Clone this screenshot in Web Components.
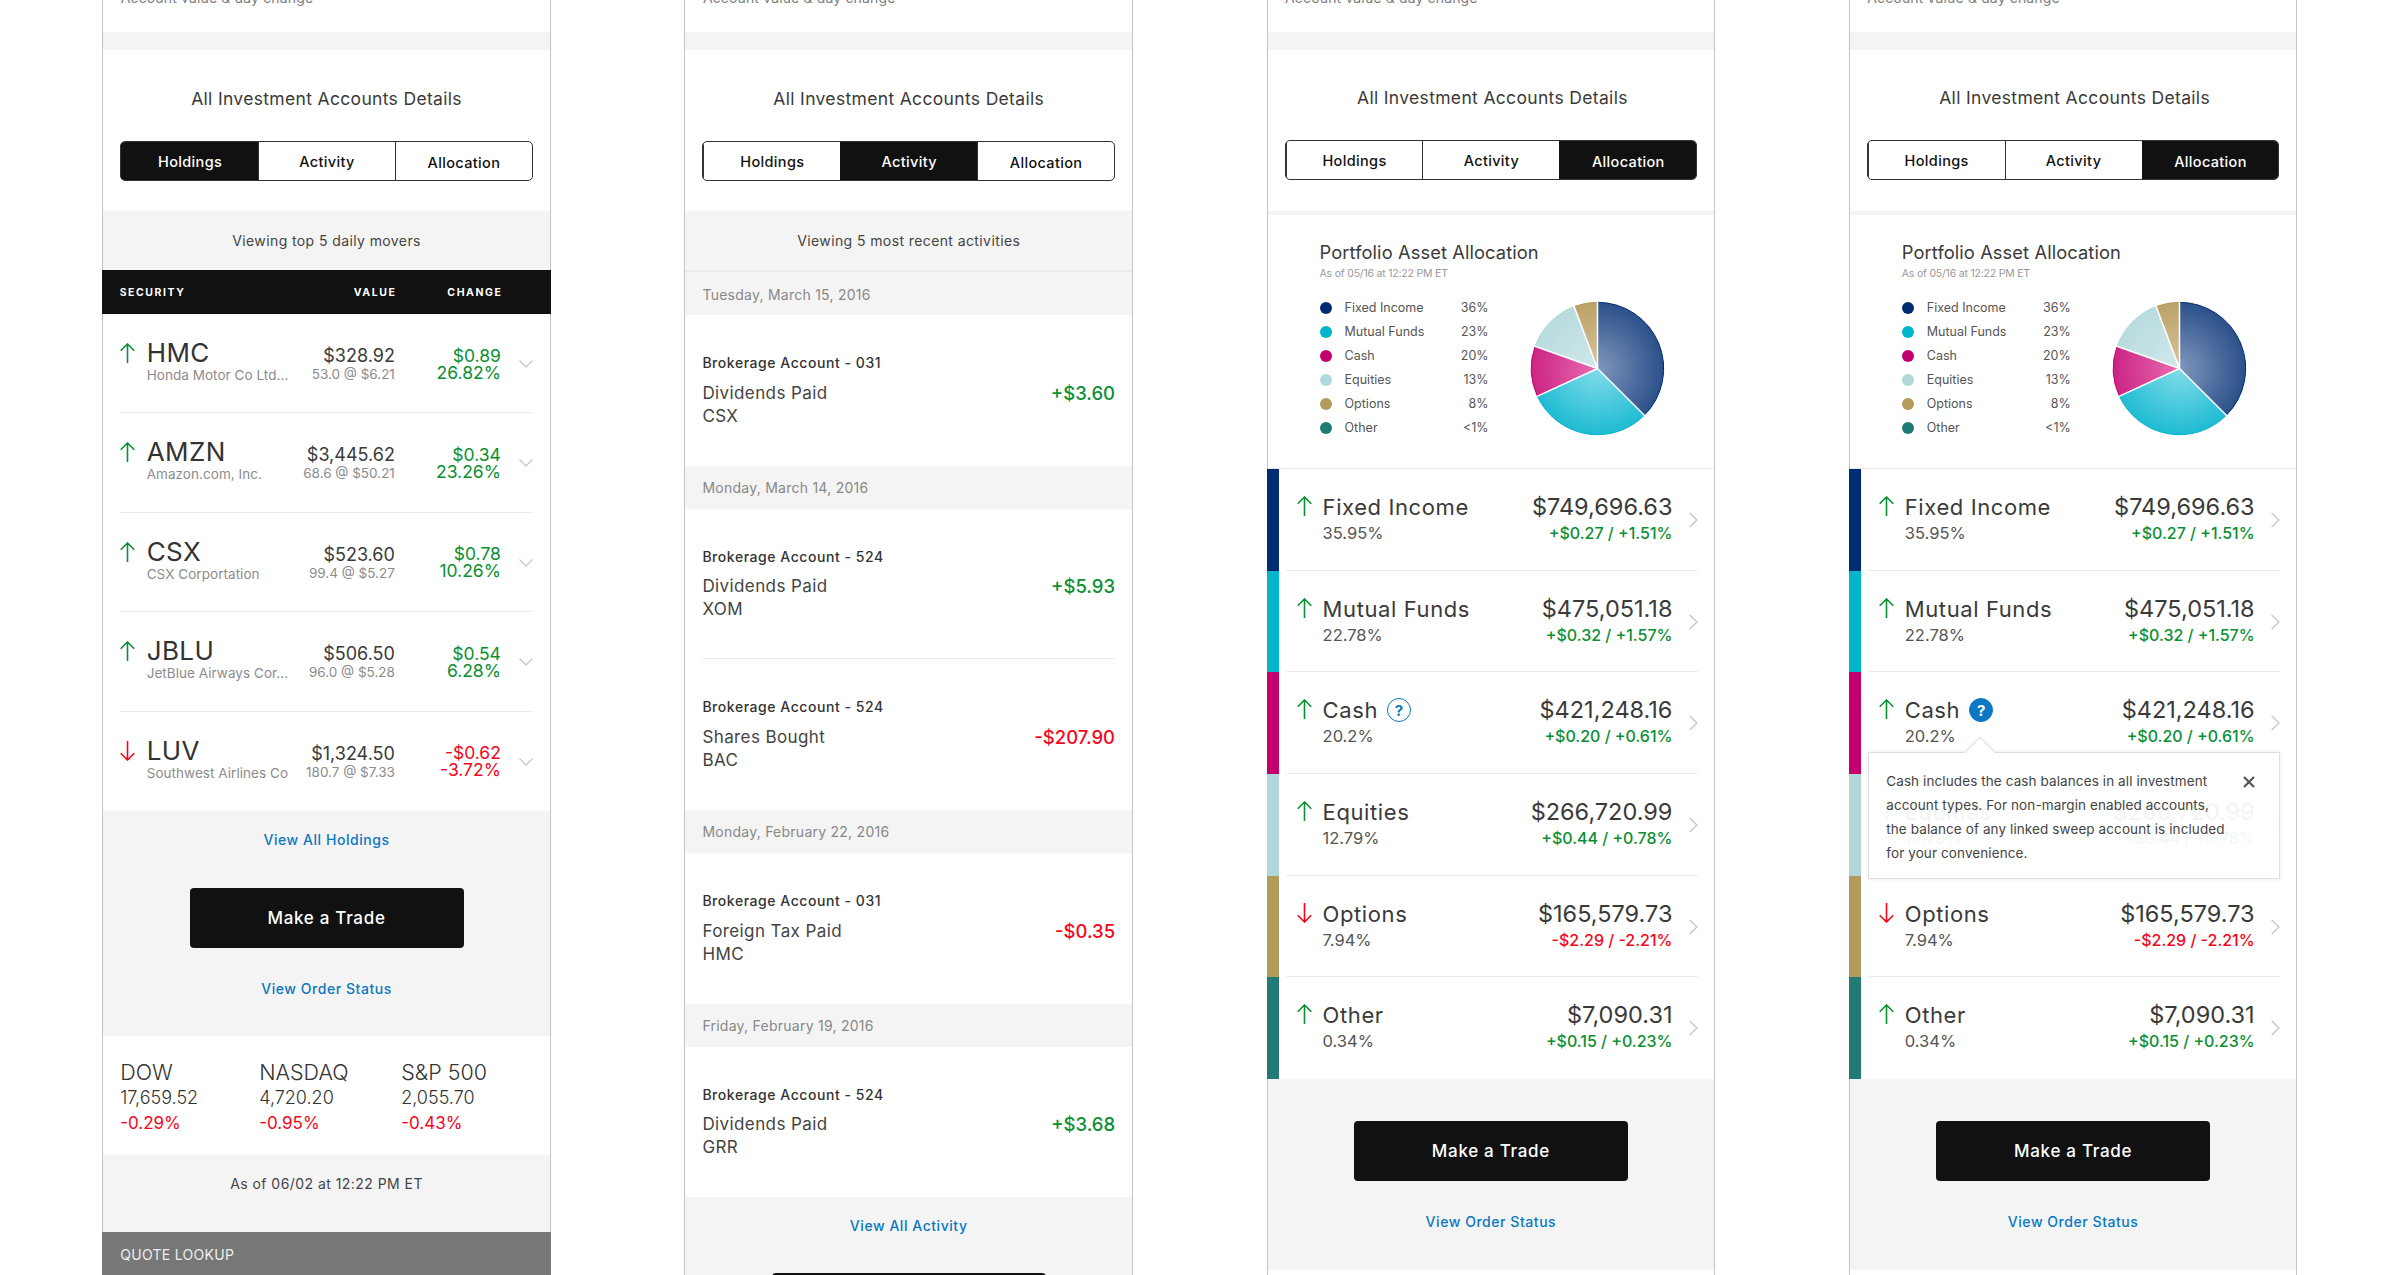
<!DOCTYPE html>
<html>
<head>
<meta charset="utf-8">
<title>Investment accounts</title>
<style>
  html, body { margin: 0; height: 1275px; overflow: hidden; background: #fff; }
  body { font-family: Inter, "Noto Sans", "Liberation Sans", sans-serif; color: #333; }
  .board { display: flex; gap: 133.5px; padding-left: 102.2px; }
</style>
</head>
<body>
<div class="board">

  <fin-panel>
    <account-header active="Holdings"></account-header>
    <note-band>Viewing top 5 daily movers</note-band>
    <holdings-head></holdings-head>
    <holding-row ticker="HMC" name="Honda Motor Co Ltd..." value="$328.92" detail="53.0 @ $6.21" change="$0.89" pct="26.82%"></holding-row>
    <holding-row ticker="AMZN" name="Amazon.com, Inc." value="$3,445.62" detail="68.6 @ $50.21" change="$0.34" pct="23.26%"></holding-row>
    <holding-row ticker="CSX" name="CSX Corportation" value="$523.60" detail="99.4 @ $5.27" change="$0.78" pct="10.26%"></holding-row>
    <holding-row ticker="JBLU" name="JetBlue Airways Cor..." value="$506.50" detail="96.0 @ $5.28" change="$0.54" pct="6.28%"></holding-row>
    <holding-row ticker="LUV" name="Southwest Airlines Co" value="$1,324.50" detail="180.7 @ $7.33" change="-$0.62" pct="-3.72%" dir="down" last></holding-row>
    <trade-block link="View All Holdings" top="1"></trade-block>
    <market-strip></market-strip>
    <note-band quote>As of 06/02 at 12:22 PM ET</note-band>
    <quote-bar>QUOTE LOOKUP</quote-bar>
  </fin-panel>

  <fin-panel>
    <account-header active="Activity"></account-header>
    <note-band>Viewing 5 most recent activities</note-band>
    <date-band first>Tuesday, March 15, 2016</date-band>
    <activity-row account="Brokerage Account - 031" desc="Dividends Paid" sym="CSX" amount="+$3.60"></activity-row>
    <date-band>Monday, March 14, 2016</date-band>
    <activity-row account="Brokerage Account - 524" desc="Dividends Paid" sym="XOM" amount="+$5.93" rule></activity-row>
    <activity-row account="Brokerage Account - 524" desc="Shares Bought" sym="BAC" amount="-$207.90" dir="down"></activity-row>
    <date-band>Monday, February 22, 2016</date-band>
    <activity-row account="Brokerage Account - 031" desc="Foreign Tax Paid" sym="HMC" amount="-$0.35" dir="down"></activity-row>
    <date-band>Friday, February 19, 2016</date-band>
    <activity-row account="Brokerage Account - 524" desc="Dividends Paid" sym="GRR" amount="+$3.68"></activity-row>
    <trade-block link="View All Activity"></trade-block>
  </fin-panel>

  <fin-panel>
    <account-header active="Allocation" tight></account-header>
    <allocation-summary></allocation-summary>
    <alloc-row color="#002d72" name="Fixed Income" pct="35.95%" value="$749,696.63" change="+$0.27 / +1.51%"></alloc-row>
    <alloc-row color="#00b5cc" name="Mutual Funds" pct="22.78%" value="$475,051.18" change="+$0.32 / +1.57%"></alloc-row>
    <alloc-row color="#c4006f" name="Cash" pct="20.2%" value="$421,248.16" change="+$0.20 / +0.61%" help="outline"></alloc-row>
    <alloc-row color="#b0d8db" name="Equities" pct="12.79%" value="$266,720.99" change="+$0.44 / +0.78%"></alloc-row>
    <alloc-row color="#b39b5c" name="Options" pct="7.94%" value="$165,579.73" change="-$2.29 / -2.21%" dir="down"></alloc-row>
    <alloc-row color="#217a76" name="Other" pct="0.34%" value="$7,090.31" change="+$0.15 / +0.23%" last></alloc-row>
    <trade-block></trade-block>
  </fin-panel>

  <fin-panel>
    <account-header active="Allocation" tight></account-header>
    <allocation-summary></allocation-summary>
    <alloc-row color="#002d72" name="Fixed Income" pct="35.95%" value="$749,696.63" change="+$0.27 / +1.51%"></alloc-row>
    <alloc-row color="#00b5cc" name="Mutual Funds" pct="22.78%" value="$475,051.18" change="+$0.32 / +1.57%"></alloc-row>
    <alloc-row color="#c4006f" name="Cash" pct="20.2%" value="$421,248.16" change="+$0.20 / +0.61%" help="filled">
      <info-tip slot="tip">Cash includes the cash balances in all investment<br>account types. For non-margin enabled accounts,<br>the balance of any linked sweep account is included<br>for your convenience.</info-tip>
    </alloc-row>
    <alloc-row color="#b0d8db" name="Equities" pct="12.79%" value="$266,720.99" change="+$0.44 / +0.78%"></alloc-row>
    <alloc-row color="#b39b5c" name="Options" pct="7.94%" value="$165,579.73" change="-$2.29 / -2.21%" dir="down"></alloc-row>
    <alloc-row color="#217a76" name="Other" pct="0.34%" value="$7,090.31" change="+$0.15 / +0.23%" last></alloc-row>
    <trade-block></trade-block>
  </fin-panel>

</div>

<script>
const GREEN = '#0a8f32';
const RED = '#f5061a';

class FinPanel extends HTMLElement {
  constructor() {
    super();
    this.attachShadow({mode: 'open'});
    this.shadowRoot.innerHTML = `
      <style>
        :host { display: block; box-sizing: border-box; width: 448.7px; height: 1275px; flex: none;
                border-left: 1px solid #c4c4c4; border-right: 1px solid #c4c4c4; background: #fff; }
      </style>
      <slot></slot>`;
  }
}

class AccountHeader extends HTMLElement {
  connectedCallback() {
    const tight = this.hasAttribute('tight');
    const active = this.getAttribute('active');
    this.attachShadow({mode: 'open'});
    this.shadowRoot.innerHTML = `
      <style>
        :host { display: block; }
        .clip { height: 32px; overflow: hidden; padding-left: 17.5px; }
        .clip div { margin-top: -12px; font-size: 14px; line-height: 20px; letter-spacing: .15px; color: #808080; }
        .gap { height: 18px; background: #f4f4f4; }
        .body { height: 161px; box-sizing: border-box; padding: ${tight ? 34.5 : 36}px 17px 0; }
        h2 { margin: 0 0 ${tight ? 29.5 : 29}px; padding-left: ${tight ? 3 : 0}px; font-size: 17.5px; line-height: 26px;
             font-weight: 400; text-align: center; letter-spacing: .33px; color: #3a3a3a; }
      </style>
      <div class="clip"><div>Account value &amp; day change</div></div>
      <div class="gap"></div>
      <div class="body">
        <h2>All Investment Accounts Details</h2>
        <seg-tabs active="${active}"></seg-tabs>
      </div>`;
  }
}

class SegTabs extends HTMLElement {
  connectedCallback() {
    const active = this.getAttribute('active');
    this.attachShadow({mode: 'open'});
    const tabs = ['Holdings', 'Activity', 'Allocation'].map(t =>
      `<div class="tab ${t === active ? 'on' : ''} ${t === 'Allocation' ? 'low' : ''}">${t}</div>`).join('');
    this.shadowRoot.innerHTML = `
      <style>
        :host { display: grid; grid-template-columns: 1fr 1fr 1fr; box-sizing: border-box; height: 40px;
                border: 1.5px solid #333; border-radius: 5px; overflow: hidden; }
        .tab { display: flex; align-items: center; justify-content: center; font-size: 14.5px; font-weight: 500;
               letter-spacing: .35px; color: #111; border-left: 1.5px solid #333; }
        .tab:first-child { border-left: 0; }
        .on { background: #111; color: #fff; border-left-color: #111; }
        .low { padding-top: 2px; box-sizing: border-box; }
      </style>
      ${tabs}`;
  }
}

class NoteBand extends HTMLElement {
  constructor() {
    super();
    this.attachShadow({mode: 'open'});
    this.shadowRoot.innerHTML = `
      <style>
        :host { display: flex; justify-content: center; box-sizing: border-box; height: 59px; padding-top: 18px;
                line-height: 24px; font-size: 14px; letter-spacing: .4px; background: #f4f4f4; color: #444; }
        :host([quote]) { height: 77px; padding-top: 17px; letter-spacing: .45px; }
      </style>
      <slot></slot>`;
  }
}

class HoldingsHead extends HTMLElement {
  constructor() {
    super();
    this.attachShadow({mode: 'open'});
    this.shadowRoot.innerHTML = `
      <style>
        :host { display: grid; grid-template-columns: 1fr 106px; box-sizing: border-box; height: 44px;
                margin: 0 -1px; padding: 0 48.5px 0 17.5px; align-items: center; background: #111; color: #fff;
                font-size: 10.5px; font-weight: 700; letter-spacing: 1.55px; }
        .r { text-align: right; }
        .value { display: flex; justify-content: space-between; }
      </style>
      <div class="value"><span>SECURITY</span><span>VALUE</span></div>
      <div class="r">CHANGE</div>`;
  }
}

class DirArrow extends HTMLElement {
  connectedCallback() {
    const down = this.getAttribute('dir') === 'down';
    this.attachShadow({mode: 'open'});
    this.shadowRoot.innerHTML = `
      <style>:host { display: block; width: 15px; height: 20px; } svg { display: block; }</style>
      <svg width="15" height="20" viewBox="0 0 15 20" fill="none" stroke="${down ? RED : GREEN}" stroke-width="1.6">
        <path d="${down ? 'M7.5 0V19M.7 12.3 7.5 19l6.8-6.7' : 'M7.5 20V1M.7 7.7 7.5 1l6.8 6.7'}"/>
      </svg>`;
  }
}

class HoldingRow extends HTMLElement {
  connectedCallback() {
    const a = n => this.getAttribute(n);
    const down = a('dir') === 'down';
    this.attachShadow({mode: 'open'});
    this.shadowRoot.innerHTML = `
      <style>
        :host { display: block; padding: 0 17px; }
        .row { display: grid; grid-template-columns: 26.5px minmax(0, 1fr) auto 106px 32px; box-sizing: border-box;
               height: 99.4px; border-bottom: ${this.hasAttribute('last') ? 0 : '1px solid #ececec'}; }
        dir-arrow { margin-top: 29px; }
        .name { padding-top: 26px; white-space: nowrap; }
        .ticker { font-size: 26px; line-height: 26px; letter-spacing: .4px; color: #333; }
        .sub { font-size: 13.5px; line-height: 18px; color: #8c8c8c; letter-spacing: .05px; }
        .value { padding-top: 32px; text-align: right; white-space: nowrap; }
        .amount { font-size: 18px; line-height: 20px; color: #3a3a3a; }
        .detail { font-size: 13.5px; line-height: 16px; color: #8c8c8c; }
        .change { padding-top: 32.5px; text-align: right; font-size: 17.5px; line-height: 17px; color: ${down ? RED : GREEN}; }
        svg { display: block; margin: 46px 0 0 auto; }
      </style>
      <div class="row">
        <dir-arrow dir="${down ? 'down' : 'up'}"></dir-arrow>
        <div class="name"><div class="ticker">${a('ticker')}</div><div class="sub">${a('name')}</div></div>
        <div class="value"><div class="amount">${a('value')}</div><div class="detail">${a('detail')}</div></div>
        <div class="change"><div>${a('change')}</div><div>${a('pct')}</div></div>
        <svg width="14" height="8" viewBox="0 0 14 8" fill="none" stroke="#c8c8c8" stroke-width="1.4"><path d="M.5.5 7 7 13.5.5"/></svg>
      </div>`;
  }
}

class TradeBlock extends HTMLElement {
  connectedCallback() {
    const link = this.getAttribute('link');
    const extra = Number(this.getAttribute('top') || 0);
    this.attachShadow({mode: 'open'});
    this.shadowRoot.innerHTML = `
      <style>
        :host { display: flex; flex-direction: column; align-items: center; background: #f4f4f4;
                padding: ${link ? 15 : 41.8}px 0 ${link ? 34 - extra : 33.7}px; }
        a { font-size: 14px; line-height: 28px; font-weight: 500; letter-spacing: .55px; color: #0a78c2; }
        .btn { display: flex; align-items: center; justify-content: center; box-sizing: border-box; width: 274px; height: 60px;
               margin: ${(link ? 33 : 0) + extra}px 0 27px; border-radius: 4px; background: #111; color: #fff;
               font-size: 17px; font-weight: 500; letter-spacing: .7px; }
      </style>
      ${link ? `<a>${link}</a>` : ''}
      <div class="btn">Make a Trade</div>
      <a>View Order Status</a>`;
  }
}

class MarketStrip extends HTMLElement {
  constructor() {
    super();
    this.attachShadow({mode: 'open'});
    const col = (n, v, p) => `<div><div class="n">${n}</div><div class="v">${v}</div><div class="p">${p}</div></div>`;
    this.shadowRoot.innerHTML = `
      <style>
        :host { display: grid; grid-template-columns: 139px 142px 1fr; box-sizing: border-box; height: 119px;
                padding: 23px 0 0 17px; color: #333; }
        .n { font-size: 21.5px; line-height: 26px; font-weight: 300; }
        .v { font-size: 18px; line-height: 26px; font-weight: 300; }
        .p { font-size: 17px; line-height: 24px; color: ${RED}; }
      </style>
      ${col('DOW', '17,659.52', '-0.29%')}
      ${col('NASDAQ', '4,720.20', '-0.95%')}
      ${col('S&amp;P 500', '2,055.70', '-0.43%')}`;
  }
}

class QuoteBar extends HTMLElement {
  constructor() {
    super();
    this.attachShadow({mode: 'open'});
    this.shadowRoot.innerHTML = `
      <style>
        :host { display: block; box-sizing: border-box; height: 43px; margin: 0 -1px; padding: 11px 0 0 18px;
                line-height: 24px; font-size: 14px; letter-spacing: .3px; background: #777; color: #eee; }
      </style>
      <slot></slot>`;
  }
}

class DateBand extends HTMLElement {
  constructor() {
    super();
    this.attachShadow({mode: 'open'});
    this.shadowRoot.innerHTML = `
      <style>
        :host { display: block; box-sizing: border-box; height: 43px; padding: 11px 0 0 17px; line-height: 22px;
                font-size: 14px; letter-spacing: .25px; background: #f4f4f4; color: #888; }
        :host([first]) { height: 45px; padding-top: 12px; border-top: 2px solid #ececec; }
      </style>
      <slot></slot>`;
  }
}

class ActivityRow extends HTMLElement {
  connectedCallback() {
    const a = n => this.getAttribute(n);
    const down = a('dir') === 'down';
    this.attachShadow({mode: 'open'});
    this.shadowRoot.innerHTML = `
      <style>
        :host { display: block; padding: 0 17px; }
        .row { display: flex; justify-content: space-between; box-sizing: border-box; height: 150.7px; padding-top: 38px;
               border-bottom: ${this.hasAttribute('rule') ? '1px solid #ececec' : 0}; }
        .acct { margin-bottom: 8.5px; font-size: 14px; line-height: 20px; font-weight: 500; letter-spacing: .55px; color: #333; }
        .line { font-size: 17px; line-height: 23px; letter-spacing: .4px; color: #444; }
        .amt { margin-top: 28.5px; font-size: 18.5px; line-height: 23px; font-weight: 500; color: ${down ? RED : GREEN}; }
      </style>
      <div class="row">
        <div><div class="acct">${a('account')}</div><div class="line">${a('desc')}</div><div class="line">${a('sym')}</div></div>
        <div class="amt">${a('amount')}</div>
      </div>`;
  }
}

class PieChart extends HTMLElement {
  connectedCallback() {
    const c = 67.5, r = 66.2;
    const pt = (deg, rad) => {
      const t = deg * Math.PI / 180;
      return (c + rad * Math.sin(t)).toFixed(2) + ' ' + (c - rad * Math.cos(t)).toFixed(2);
    };
    const parts = [
      {from: 0, to: 135, inner: '#8097bd', outer: '#2b5089', edge: '#002d72'},
      {from: 135, to: 245.3, inner: '#82dde9', outer: '#1fbbd3', edge: '#00b5cc'},
      {from: 245.3, to: 289.6, inner: '#e96cb0', outer: '#cc2484', edge: '#c4006f'},
      {from: 289.6, to: 339.3, inner: '#d0e8ea', outer: '#b9dcdf', edge: '#b0d8db'},
      {from: 339.3, to: 360, inner: '#d6c49c', outer: '#bca268', edge: '#b39b5c'}
    ];
    let defs = '', body = '';
    parts.forEach((p, i) => {
      defs += `<radialGradient id="g${i}" gradientUnits="userSpaceOnUse" cx="${c}" cy="${c}" r="${r}">
        <stop offset="0" stop-color="${p.inner}"/><stop offset="1" stop-color="${p.outer}"/></radialGradient>`;
      const big = p.to - p.from > 180 ? 1 : 0;
      const arc = `M${pt(p.from, r)}A${r} ${r} 0 ${big} 1 ${pt(p.to, r)}`;
      body += `<path d="M${c} ${c}L${pt(p.from, r)}A${r} ${r} 0 ${big} 1 ${pt(p.to, r)}Z" fill="url(#g${i})"/>`;
      body += `<path d="${arc}" fill="none" stroke="${p.edge}" stroke-width="1"/>`;
    });
    parts.forEach(p => { body += `<path d="M${c} ${c}L${pt(p.from, r + 1)}" stroke="#fff" stroke-width="1.5"/>`; });
    this.attachShadow({mode: 'open'});
    this.shadowRoot.innerHTML = `
      <style>:host { display: block; width: 135px; height: 135px; } svg { display: block; }</style>
      <svg width="135" height="135" viewBox="0 0 135 135"><defs>${defs}</defs>${body}</svg>`;
  }
}

class AllocationSummary extends HTMLElement {
  constructor() {
    super();
    this.attachShadow({mode: 'open'});
    const rows = [['#002d72', 'Fixed Income', '36%'], ['#00b5cc', 'Mutual Funds', '23%'], ['#c4006f', 'Cash', '20%'],
                  ['#b0d8db', 'Equities', '13%'], ['#b39b5c', 'Options', '8%'], ['#217a76', 'Other', '<1%']];
    const legend = rows.map(r => `
      <i style="background:${r[0]}"></i><span>${r[1]}</span><b>${r[2].replace('<', '&lt;')}</b>`).join('');
    this.shadowRoot.innerHTML = `
      <style>
        :host { display: block; box-sizing: border-box; height: 258px; border-top: 4px solid #f4f4f4;
                border-bottom: 1px solid #e9e9e9; padding: 24px 0 0 52px; }
        h3 { margin: 0; font-size: 18.3px; line-height: 26px; font-weight: 400; letter-spacing: .1px; color: #3a3a3a; }
        .asof { font-size: 10.5px; line-height: 18px; letter-spacing: -.2px; color: #999; }
        .chart { display: flex; align-items: flex-start; margin-top: 12.8px; }
        .legend { display: grid; grid-template-columns: 25px 1fr auto; width: 169px; grid-auto-rows: 24px; align-items: center;
                  font-size: 12.5px; color: #555; }
        i { display: block; width: 12px; height: 12px; border-radius: 50%; }
        b { font-weight: 400; text-align: right; }
        pie-chart { margin: 5px 0 0 41px; }
      </style>
      <h3>Portfolio Asset Allocation</h3>
      <div class="asof">As of 05/16 at 12:22 PM ET</div>
      <div class="chart"><div class="legend">${legend}</div><pie-chart></pie-chart></div>`;
  }
}

class HelpBadge extends HTMLElement {
  constructor() {
    super();
    this.attachShadow({mode: 'open'});
    this.shadowRoot.innerHTML = `
      <style>
        :host { display: flex; align-items: center; justify-content: center; box-sizing: border-box; width: 24px; height: 24px;
                border: 1.5px solid #0a78c2; border-radius: 50%; color: #0a78c2; font-size: 15px; font-weight: 700; }
        :host([filled]) { background: #0a78c2; color: #fff; }
      </style>?`;
  }
}

class AllocRow extends HTMLElement {
  connectedCallback() {
    const a = n => this.getAttribute(n);
    const down = a('dir') === 'down';
    const help = a('help');
    this.attachShadow({mode: 'open'});
    this.shadowRoot.innerHTML = `
      <style>
        :host { display: flex; position: relative; height: 101.7px; margin-left: -1px; }
        .bar { width: 12px; flex: none; background: ${a('color')}; }
        .row { flex: 1; display: grid; grid-template-columns: 26px 1fr auto 25.3px; box-sizing: border-box;
               margin: 0 16.5px 0 7px; padding-left: 11px;
               border-bottom: ${this.hasAttribute('last') ? 0 : '1.5px solid #ececec'}; }
        dir-arrow { margin-top: 27px; }
        .left, .right { padding-top: 24px; white-space: nowrap; }
        .top { display: flex; align-items: center; gap: 9px; height: 28px; }
        .name { font-size: 22px; line-height: 28px; letter-spacing: .6px; color: #3a3a3a; }
        .pct { font-size: 16.5px; line-height: 24px; color: #555; }
        .right { text-align: right; }
        .val { font-size: 23.5px; line-height: 28px; color: #3a3a3a; }
        .chg { font-size: 16px; font-weight: 500; line-height: 24px; color: ${down ? RED : GREEN}; }
        svg { display: block; margin: 43px 0 0 auto; }
        ::slotted(*) { position: absolute; left: 19px; top: 79.2px; z-index: 2; }
      </style>
      <div class="bar"></div>
      <div class="row">
        <dir-arrow dir="${down ? 'down' : 'up'}"></dir-arrow>
        <div class="left">
          <div class="top"><span class="name">${a('name')}</span>${help ? `<help-badge ${help === 'filled' ? 'filled' : ''}></help-badge>` : ''}</div>
          <div class="pct">${a('pct')}</div>
        </div>
        <div class="right"><div class="val">${a('value')}</div><div class="chg">${a('change')}</div></div>
        <svg width="9" height="16" viewBox="0 0 9 16" fill="none" stroke="#c8c8c8" stroke-width="1.4"><path d="M.7 1 8 8 .7 15"/></svg>
      </div>
      <slot name="tip"></slot>`;
  }
}

class InfoTip extends HTMLElement {
  constructor() {
    super();
    this.attachShadow({mode: 'open'});
    this.shadowRoot.innerHTML = `
      <style>
        :host { display: block; box-sizing: border-box; width: 412.5px; height: 127px; padding: 16.5px 0 0 17.5px;
                background: rgba(255,255,255,.94); border: 1px solid #dedede; box-shadow: 0 0 4px rgba(0,0,0,.1);
                font-size: 13.5px; line-height: 24px; letter-spacing: .1px; color: #444; white-space: nowrap; }
        .notch { position: absolute; left: 100px; top: -12px; width: 22px; height: 22px; transform: rotate(45deg);
                 background: #fff; border: 1px solid #dedede; border-right: 0; border-bottom: 0; box-sizing: border-box; }
        svg { position: absolute; right: 24px; top: 23px; }
        .text { position: relative; }
      </style>
      <div class="notch"></div>
      <div class="text"><slot></slot></div>
      <svg width="12" height="12" viewBox="0 0 12 12" fill="none" stroke="#555" stroke-width="2.2"><path d="M1 1 11 11M11 1 1 11"/></svg>`;
  }
}

customElements.define('fin-panel', FinPanel);
customElements.define('account-header', AccountHeader);
customElements.define('seg-tabs', SegTabs);
customElements.define('note-band', NoteBand);
customElements.define('holdings-head', HoldingsHead);
customElements.define('dir-arrow', DirArrow);
customElements.define('holding-row', HoldingRow);
customElements.define('trade-block', TradeBlock);
customElements.define('market-strip', MarketStrip);
customElements.define('quote-bar', QuoteBar);
customElements.define('date-band', DateBand);
customElements.define('activity-row', ActivityRow);
customElements.define('pie-chart', PieChart);
customElements.define('allocation-summary', AllocationSummary);
customElements.define('help-badge', HelpBadge);
customElements.define('alloc-row', AllocRow);
customElements.define('info-tip', InfoTip);
</script>
</body>
</html>
